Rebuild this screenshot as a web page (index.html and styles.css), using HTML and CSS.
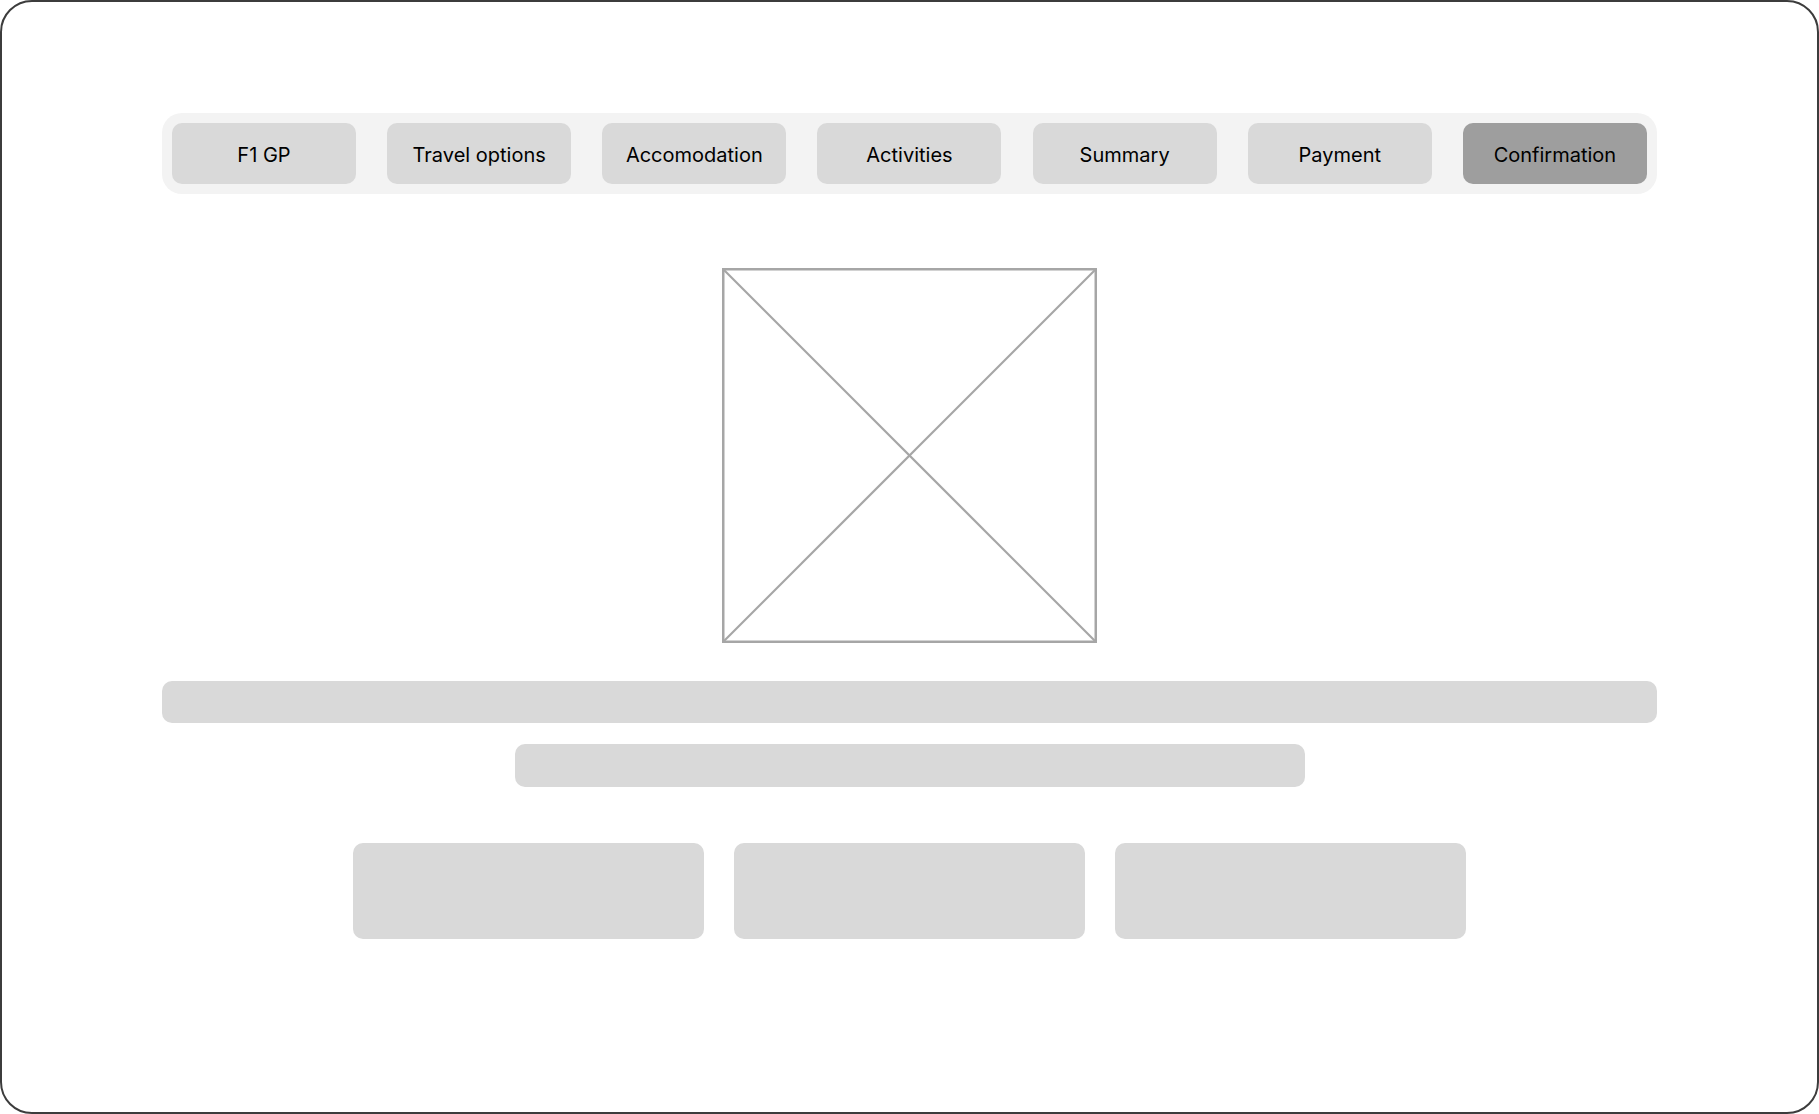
FILE: index.html
```html
<!DOCTYPE html>
<html lang="en">
<head>
<meta charset="utf-8">
<title>Confirmation</title>
<link rel="stylesheet" href="styles.css">
</head>
<body>
<div class="frame">
  <nav class="steps">
    <div class="step">F1 GP</div>
    <div class="step">Travel options</div>
    <div class="step">Accomodation</div>
    <div class="step">Activities</div>
    <div class="step">Summary</div>
    <div class="step">Payment</div>
    <div class="step active">Confirmation</div>
  </nav>
  <div class="hero">
    <svg class="placeholder" width="375" height="375" viewBox="0 0 375 375">
      <rect x="1.25" y="1.25" width="372.5" height="372.5" fill="none" stroke="#a6a6a6" stroke-width="2.5"/>
      <line x1="1.25" y1="1.25" x2="373.75" y2="373.75" stroke="#a6a6a6" stroke-width="2.2"/>
      <line x1="373.75" y1="1.25" x2="1.25" y2="373.75" stroke="#a6a6a6" stroke-width="2.2"/>
    </svg>
  </div>
  <div class="bar bar-wide"></div>
  <div class="bar bar-narrow"></div>
  <div class="cards">
    <div class="card"></div>
    <div class="card"></div>
    <div class="card"></div>
  </div>
</div>
</body>
</html>
```

FILE: styles.css
```css
html, body {
  margin: 0;
  padding: 0;
  background: #ffffff;
}
body {
  font-family: Inter, "Noto Sans", sans-serif;
}
.frame {
  box-sizing: border-box;
  width: 1819px;
  height: 1114px;
  border: 2px solid #3c3c3c;
  border-radius: 32px;
  padding: 111px 160px 0 160px;
  display: flex;
  flex-direction: column;
  align-items: center;
}
.steps {
  box-sizing: border-box;
  width: 1495px;
  height: 81px;
  background: #f3f3f3;
  border-radius: 20px;
  padding: 10px;
  display: flex;
  justify-content: space-between;
  align-items: center;
}
.step {
  box-sizing: border-box;
  width: 184px;
  height: 61px;
  padding-top: 2px;
  background: #d9d9d9;
  border-radius: 10px;
  display: flex;
  align-items: center;
  justify-content: center;
  font-size: 20px;
  color: #000000;
}
.step.active {
  background: #9e9e9e;
}
.hero {
  margin-top: 74px;
  display: flex;
  justify-content: center;
}
.placeholder {
  display: block;
}
.bar {
  background: #d9d9d9;
  border-radius: 10px;
}
.bar-wide {
  width: 1495px;
  height: 42px;
  margin-top: 38px;
}
.bar-narrow {
  width: 790px;
  height: 43px;
  margin-top: 21px;
}
.cards {
  margin-top: 56px;
  display: flex;
  gap: 30px;
}
.card {
  width: 351px;
  height: 96px;
  background: #d9d9d9;
  border-radius: 10px;
}
```
